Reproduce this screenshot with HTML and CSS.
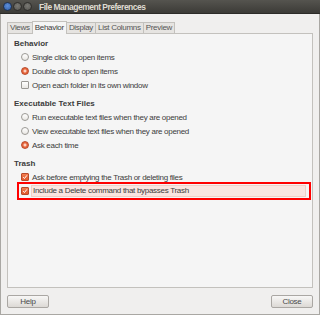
FILE: index.html
```html
<!DOCTYPE html>
<html>
<head>
<meta charset="utf-8">
<link rel="stylesheet" href="styles.css">
</head>
<body>
<div class="window">
  <div class="titlebar">
    <div class="controls">
      <span class="ctl close"></span>
      <span class="ctl"></span>
      <span class="ctl"></span>
    </div>
    <div class="title">File Management Preferences</div>
  </div>
  <div class="body">
    <div class="tabs">
      <div class="tab">Views</div>
      <div class="tab active">Behavior</div>
      <div class="tab">Display</div>
      <div class="tab">List Columns</div>
      <div class="tab">Preview</div>
    </div>
    <div class="panel">
      <div class="section">
        <div class="heading">Behavior</div>
        <div class="row"><span class="radio"></span><span class="label">Single click to open items</span></div>
        <div class="row"><span class="radio on"></span><span class="label">Double click to open items</span></div>
        <div class="row"><span class="check"></span><span class="label">Open each folder in its own window</span></div>
      </div>
      <div class="section">
        <div class="heading">Executable Text Files</div>
        <div class="row"><span class="radio"></span><span class="label">Run executable text files when they are opened</span></div>
        <div class="row"><span class="radio"></span><span class="label">View executable text files when they are opened</span></div>
        <div class="row"><span class="radio on"></span><span class="label">Ask each time</span></div>
      </div>
      <div class="section">
        <div class="heading">Trash</div>
        <div class="row"><span class="check on"><svg viewBox="0 0 8 8"><path d="M1.5 4.2 L3.3 6 L6.6 1.8" fill="none" stroke="#fff" stroke-width="1.3"/></svg></span><span class="label">Ask before emptying the Trash or deleting files</span></div>
        <div class="row marked"><span class="check on"><svg viewBox="0 0 8 8"><path d="M1.5 4.2 L3.3 6 L6.6 1.8" fill="none" stroke="#fff" stroke-width="1.3"/></svg></span><span class="label focus">Include a Delete command that bypasses Trash</span></div>
      </div>
    </div>
    <div class="buttons">
      <div class="button">Help</div>
      <div class="button">Close</div>
    </div>
  </div>
</div>
</body>
</html>
```

FILE: styles.css
```css
* { box-sizing: border-box; }
html, body { margin: 0; padding: 0; }
body {
  width: 320px;
  height: 315px;
  overflow: hidden;
  background: #f0efee;
  font-family: "Liberation Sans", "DejaVu Sans", sans-serif;
  font-size: 8px;
  letter-spacing: -0.3px;
  color: #3c3c3c;
}
.window {
  width: 320px;
  height: 315px;
  display: flex;
  flex-direction: column;
  background: #f0efee;
  border-left: 1px solid #a9a7a3;
  border-right: 1px solid #a9a7a3;
  border-bottom: 1px solid #a9a7a3;
}
.titlebar {
  height: 14px;
  margin: 0 -1px;
  background: linear-gradient(#55544f, #3c3b37);
  border-bottom: 1px solid #2c2b28;
  display: flex;
  align-items: center;
  padding-left: 3px;
}
.controls { display: flex; gap: 1px; }
.ctl {
  width: 9px;
  height: 9px;
  border-radius: 50%;
  background: radial-gradient(circle at 50% 40%, #7a7974, #55544f);
  border: 1px solid #2e2d2a;
}
.ctl.close {
  background: radial-gradient(circle at 50% 40%, #5f8fd8, #2e5ea8);
  border-color: #1f3150;
}
.title {
  margin-left: 7px;
  font-weight: bold;
  font-size: 8.5px;
  letter-spacing: -0.5px;
  color: #dfdbd2;
}
.body {
  flex: 1;
  display: flex;
  flex-direction: column;
  padding: 7px 6px 0 6px;
}
.tabs {
  display: flex;
  height: 12px;
  align-items: flex-end;
  position: relative;
  z-index: 1;
}
.tab {
  height: 11px;
  line-height: 10px;
  padding: 0 2px;
  background: #e6e4e1;
  border: 1px solid #c3c1bd;
  border-bottom: none;
  margin-right: -1px;
  color: #555;
}
.tab.active {
  height: 13px;
  line-height: 12px;
  background: #f5f5f5;
  margin-bottom: -1px;
  color: #3c3c3c;
}
.panel {
  height: 255px;
  background: #f5f5f5;
  border: 1px solid #c3c1bd;
  padding: 4px 0 0 6px;
}
.section + .section { margin-top: 6px; }
.heading {
  height: 12px;
  line-height: 12px;
  font-weight: bold;
  letter-spacing: 0;
}
.row {
  height: 14px;
  display: flex;
  align-items: center;
  margin-left: 5px;
  margin-right: 3px;
  padding-left: 2px;
}
.radio, .check {
  width: 8px;
  height: 8px;
  flex: none;
  margin-right: 2px;
  border: 1px solid #9b9995;
  background: linear-gradient(#ffffff, #e9e7e4);
}
.radio { border-radius: 50%; }
.check { border-radius: 1px; display: flex; }
.check svg { width: 100%; height: 100%; }
.radio.on {
  border-color: #b8492a;
  background: radial-gradient(circle, #fbd3c3 0 1.2px, #e8663c 1.8px);
}
.check.on {
  border-color: #b8492a;
  background: linear-gradient(#f27c4e, #e05a2d);
}
.label {
  padding: 0 1px;
  line-height: 11px;
  white-space: nowrap;
}
.row.marked {
  outline: 2px solid #ff0000;
  outline-offset: 0;
}
.label.focus {
  flex: 1;
  height: 12px;
  margin-right: 3px;
  background: #f9e5e0;
  border: 1px solid #efcfc6;
  line-height: 10px;
}
.buttons {
  display: flex;
  justify-content: space-between;
  margin-top: 7px;
}
.button {
  width: 42px;
  height: 13px;
  line-height: 11px;
  text-align: center;
  border: 1px solid #aaa7a3;
  border-radius: 2px;
  background: linear-gradient(#f8f7f6, #dcd9d5);
  color: #4a4a4a;
}
```
